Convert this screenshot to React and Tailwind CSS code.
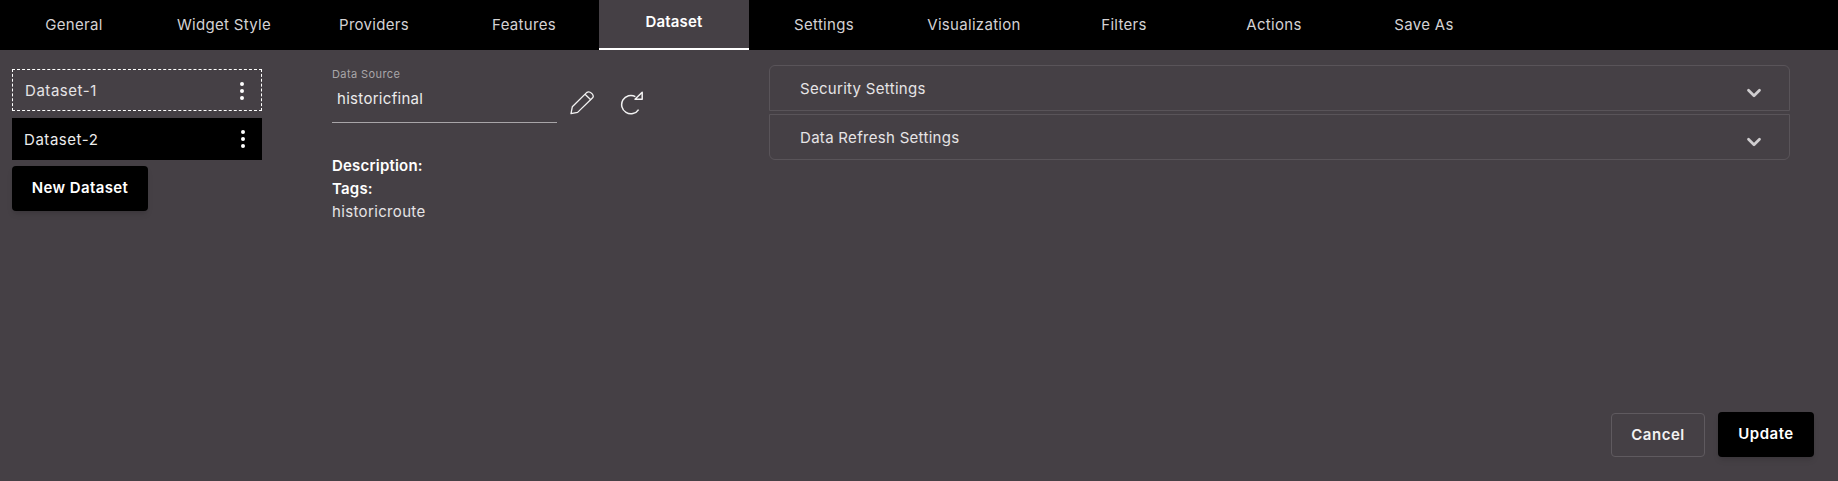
import { ChevronDown, MoreVertical } from 'lucide-react'

const tabs = ['General', 'Widget Style', 'Providers', 'Features', 'Dataset', 'Settings', 'Visualization', 'Filters', 'Actions', 'Save As']

const Tab = ({ label }) => {
  const active = label === 'Dataset'
  if (active) return (
    <div className="w-[150px] h-[50px] bg-[#454045] border-b-2 border-white flex items-center justify-center pb-[3px] text-[15px] font-semibold tracking-[0.2px] text-white">
      {label}
    </div>
  )
  return (
    <div className="w-[150px] h-[50px] flex items-center justify-center pt-px text-[15px] tracking-[0.3px] text-[#d4d2d4]">
      {label}
    </div>
  )
}

const PencilIcon = () => (
  <svg width="24" height="24" viewBox="0 0 24 24" fill="none" stroke="#f2f2f2" strokeWidth="1.3" strokeLinejoin="round">
    <path d="M1 22.6 L2.3 15.8 L16.6 1.6 C18 0.6 20 0.8 21.8 2.4 C23.4 4 23.6 5.6 22.6 6.8 L7.6 21.4 Z" />
    <path d="M15 3.2 L21 9" />
  </svg>
)

const RefreshIcon = () => (
  <svg width="24" height="24" viewBox="0 0 24 24" fill="none" stroke="#f2f2f2" strokeWidth="1.5" strokeLinejoin="round">
    <path d="M18.6 18.6 A9.2 9.2 0 1 1 15.4 5.6" />
    <path d="M22.2 1.2 L22.2 8.2 L15 8.2 Z" />
  </svg>
)

const DatasetRow = ({ label, active }) => (
  <div className={active
    ? 'w-[250px] h-[42px] border border-dashed border-white flex items-center justify-between pl-[12px] pr-[7px] text-[15px] tracking-[0.55px] text-[#e6e4e6]'
    : 'w-[250px] h-[42px] bg-black flex items-center justify-between pl-[12px] pr-[7px] text-[15px] tracking-[0.55px] text-[#ececec]'}>
    <span className="pt-[2px]">{label}</span>
    <MoreVertical size={24} strokeWidth={2} className={active ? 'text-white mt-px' : 'text-white -mt-px'} />
  </div>
)

const AccordionRow = ({ label, className }) => (
  <div className={`h-[46px] border border-[#595459] flex justify-between pl-[30px] pr-[24px] ${className}`}>
    <span className="text-[15px] tracking-[0.3px] text-[#e6e4e6] pt-[12px]">{label}</span>
    <ChevronDown size={22} strokeWidth={3} className="text-[#cfcdcf] mt-[16px]" />
  </div>
)

export default function App() {
  return (
    <div className="w-[1838px] h-[481px] bg-[#454045] flex flex-col font-['Inter',sans-serif] overflow-hidden">
      <div className="flex h-[50px] bg-black shrink-0 -ml-px">
        {tabs.map((t) => <Tab key={t} label={t} />)}
      </div>

      <div className="flex flex-1">
        <div className="w-[332px] pl-3 pt-[19px] flex flex-col">
          <DatasetRow label="Dataset-1" active />
          <div className="mt-[7px]">
            <DatasetRow label="Dataset-2" />
          </div>
          <button className="mt-[6px] w-[136px] h-[45px] bg-black rounded-[4px] shadow-md text-[15px] font-semibold tracking-[0.4px] text-white">
            New Dataset
          </button>
        </div>

        <div className="w-[437px] pt-[17px]">
          <div className="flex">
            <div className="w-[225px] h-[56px] border-b border-[#a8a5a8]">
              <div className="text-[11px] leading-[14px] tracking-[0.4px] text-[#a9a6a9]">Data Source</div>
              <div className="text-[15px] leading-[22px] tracking-[0.3px] text-[#ececec] pl-[5px] mt-[7px]">historicfinal</div>
            </div>
            <div className="ml-[13px] mt-[24px]"><PencilIcon /></div>
            <div className="ml-[26px] mt-[24px]"><RefreshIcon /></div>
          </div>
          <div className="mt-[31px] text-[15px] leading-[23px] text-white">
            <div className="font-semibold tracking-[0.2px]">Description:</div>
            <div className="font-semibold tracking-[0.2px]">Tags:</div>
            <div className="text-[#e6e4e6] tracking-[0.35px]">historicroute</div>
          </div>
        </div>

        <div className="w-[1021px] pt-[15px]">
          <AccordionRow label="Security Settings" className="rounded-t-[6px]" />
          <AccordionRow label="Data Refresh Settings" className="rounded-b-[6px] mt-[3px]" />
        </div>
      </div>

      <div className="flex justify-end gap-[13px] pr-[24px] pb-[24px]">
        <button className="w-[94px] h-[44px] mt-px border border-[#5f5a5f] rounded-[4px] text-[15px] font-semibold tracking-[0.5px] text-[#f2f2f2]">
          Cancel
        </button>
        <button className="w-[96px] h-[45px] bg-black rounded-[4px] shadow-md text-[15px] font-semibold tracking-[0.5px] text-white">
          Update
        </button>
      </div>
    </div>
  )
}
